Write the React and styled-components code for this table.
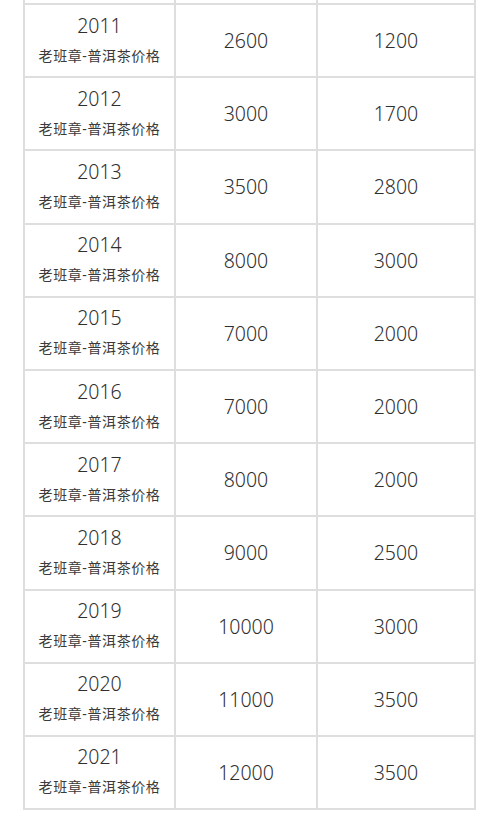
import React from 'react';
import styled, { createGlobalStyle } from 'styled-components';

const GlobalStyle = createGlobalStyle`
  html, body {
    margin: 0;
    padding: 0;
    background: #ffffff;
  }
  body {
    font-family: "Noto Sans", "Noto Sans CJK SC", sans-serif;
    color: #333333;
  }
`;

const Page = styled.div`
  width: 500px;
  height: 816px;
  overflow: hidden;
  padding-left: 23px;
  box-sizing: border-box;
`;

const Table = styled.div`
  display: grid;
  grid-template-columns: 151px 142px 158px;
  border-left: 2px solid #dedede;
  width: fit-content;
`;

const Stub = styled.div`
  height: 3px;
  border-right: 2px solid #dedede;
  border-bottom: 2px solid #dedede;
`;

const Cell = styled.div`
  height: 73.2px;
  box-sizing: border-box;
  border-right: 2px solid #dedede;
  border-bottom: 2px solid #dedede;
  display: flex;
  flex-direction: column;
  align-items: center;
  justify-content: center;
  text-align: center;
`;

const Year = styled.div`
  font-size: 19.5px;
  font-weight: 350;
  line-height: 24px;
  color: #2f2f2f;
  margin-top: -2px;
`;

const Label = styled.div`
  font-size: 14px;
  font-weight: 400;
  letter-spacing: 0.6px;
  line-height: 20px;
  margin-top: 8px;
  color: #3a3a3a;
`;

const Price = styled.div`
  font-size: 19.5px;
  font-weight: 350;
  color: #2f2f2f;
`;

const rows = [
  ['2011', '2600', '1200'],
  ['2012', '3000', '1700'],
  ['2013', '3500', '2800'],
  ['2014', '8000', '3000'],
  ['2015', '7000', '2000'],
  ['2016', '7000', '2000'],
  ['2017', '8000', '2000'],
  ['2018', '9000', '2500'],
  ['2019', '10000', '3000'],
  ['2020', '11000', '3500'],
  ['2021', '12000', '3500'],
];

export default function App() {
  return (
    <Page>
      <GlobalStyle />
      <Table>
        <Stub />
        <Stub />
        <Stub />
        {rows.map(([year, a, b]) => (
          <React.Fragment key={year}>
            <Cell>
              <Year>{year}</Year>
              <Label>老班章-普洱茶价格</Label>
            </Cell>
            <Cell>
              <Price>{a}</Price>
            </Cell>
            <Cell>
              <Price>{b}</Price>
            </Cell>
          </React.Fragment>
        ))}
      </Table>
    </Page>
  );
}
